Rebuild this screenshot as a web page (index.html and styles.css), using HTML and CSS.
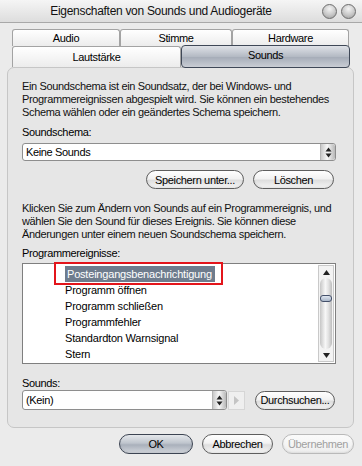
FILE: index.html
```html
<!DOCTYPE html>
<html lang="de">
<head>
<meta charset="utf-8">
<title>Eigenschaften von Sounds und Audiogeräte</title>
<link rel="stylesheet" href="styles.css">
</head>
<body>
<div class="window">
  <div class="titlebar">
    <span class="title">Eigenschaften von Sounds und Audiogeräte</span>
    <div class="winbtns"><span class="wb"></span><span class="wb"></span></div>
  </div>
  <div class="tabs">
    <div class="tabrow back">
      <div class="tab t-audio">Audio</div>
      <div class="tab t-stimme">Stimme</div>
      <div class="tab t-hw">Hardware</div>
    </div>
    <div class="tabrow front">
      <div class="tab t-laut">Lautstärke</div>
      <div class="tab t-sounds active">Sounds</div>
    </div>
  </div>
  <div class="panel">
    <p class="txt">Ein Soundschema ist ein Soundsatz, der bei Windows- und<br>Programmereignissen abgespielt wird. Sie können ein bestehendes<br>Schema wählen oder ein geändertes Schema speichern.</p>
    <div class="lbl lbl-schema">Soundschema:</div>
    <div class="select sel-schema"><span class="val">Keine Sounds</span><span class="spin"><svg width="7" height="11" viewBox="0 0 7 11"><path d="M3.5 0.5L6.5 4.5H0.5Z M3.5 10.5L6.5 6.5H0.5Z" fill="#222"/></svg></span></div>
    <div class="btnrow">
      <button class="btn b-save">Speichern unter...</button>
      <button class="btn b-del">Löschen</button>
    </div>
    <p class="txt txt2">Klicken Sie zum Ändern von Sounds auf ein Programmereignis, und<br>wählen Sie den Sound für dieses Ereignis. Sie können diese<br>Änderungen unter einem neuen Soundschema speichern.</p>
    <div class="lbl lbl-events">Programmereignisse:</div>
    <div class="list">
      <ul class="items">
        <li><span class="sel">Posteingangsbenachrichtigung</span></li>
        <li>Programm öffnen</li>
        <li>Programm schließen</li>
        <li>Programmfehler</li>
        <li>Standardton Warnsignal</li>
        <li>Stern</li>
      </ul>
      <div class="scrollbar">
        <span class="arr"><svg width="7" height="5" viewBox="0 0 7 5"><path d="M3.5 0L7 5H0Z" fill="#222"/></svg></span>
        <div class="track"><span class="thumb"></span></div>
        <span class="arr"><svg width="7" height="5" viewBox="0 0 7 5"><path d="M0 0H7L3.5 5Z" fill="#222"/></svg></span>
      </div>
      <div class="mark"></div>
    </div>
    <div class="lbl lbl-sounds">Sounds:</div>
    <div class="soundrow">
      <div class="select sel-sound"><span class="val">(Kein)</span><span class="spin"><svg width="7" height="11" viewBox="0 0 7 11"><path d="M3.5 0.5L6.5 4.5H0.5Z M3.5 10.5L6.5 6.5H0.5Z" fill="#222"/></svg></span></div>
      <span class="play"><svg width="5" height="9" viewBox="0 0 5 9"><path d="M0 0L5 4.5L0 9Z" fill="#c4c4c4"/></svg></span>
      <button class="btn b-browse">Durchsuchen...</button>
    </div>
  </div>
  <div class="footer">
    <button class="btn b-ok">OK</button>
    <button class="btn b-cancel">Abbrechen</button>
    <button class="btn b-apply" disabled>Übernehmen</button>
  </div>
</div>
</body>
</html>
```
FILE: styles.css
```css
* { box-sizing: border-box; }
html, body { margin: 0; padding: 0; }
body {
  width: 362px;
  height: 466px;
  background: #e8e8e8;
  font-family: "Liberation Sans", Arial, sans-serif;
  font-size: 11px;
  letter-spacing: -0.35px;
  color: #000;
  overflow: hidden;
}
.window {
  width: 362px;
  height: 466px;
  display: flex;
  flex-direction: column;
  background: #ebebeb;
}
.titlebar {
  height: 23px;
  display: flex;
  align-items: center;
  background: linear-gradient(#f5f5f5, #dddddd);
  border-bottom: 1px solid #a8a8a8;
}
.title {
  flex: 1;
  text-align: center;
  font-size: 12px;
  letter-spacing: -0.3px;
  color: #111;
  white-space: nowrap;
}
.winbtns {
  display: flex;
  gap: 4px;
  padding-right: 6px;
}
.wb {
  width: 15px;
  height: 15px;
  border-radius: 50%;
  border: 1px solid #6d6d6d;
  background: radial-gradient(circle at 50% 30%, #f4f4f4 0%, #c8c8c8 55%, #9a9a9a 100%);
}
.tabs {
  padding: 6px 0 0 12px;
  display: flex;
  flex-direction: column;
}
.tabrow { display: flex; }
.tab {
  display: flex;
  align-items: center;
  justify-content: center;
  border: 1px solid #a3a3a3;
  border-bottom: none;
  border-radius: 3px 3px 0 0;
  background: linear-gradient(#ffffff, #ececec);
  white-space: nowrap;
}
.back .tab { height: 17px; }
.t-audio { width: 108px; }
.t-stimme { width: 112px; }
.t-hw { width: 117px; }
.front { height: 21px; }
.t-laut { width: 169px; height: 21px; }
.t-sounds {
  width: 169px;
  height: 23px;
  margin-top: -1px;
  border: 1px solid #3f4857;
  border-radius: 4px;
  background: linear-gradient(#dfe2e7 0%, #b4bac4 50%, #a4abb7 51%, #c9cdd4 100%);
  position: relative;
  z-index: 2;
  align-items: flex-start;
  padding-top: 3px;
}
.panel {
  margin: 0 8px 0 7px;
  height: 361px;
  border: 1px solid #c6c6c6;
  border-radius: 7px;
  background: #e6e6e6;
  padding: 12px 0 0 14px;
  display: flex;
  flex-direction: column;
}
.txt {
  margin: 0;
  line-height: 13px;
  color: #111;
  white-space: nowrap;
}
.lbl { line-height: 13px; }
.lbl-schema { margin-top: 7px; }
.select {
  display: flex;
  align-items: center;
  height: 18px;
  border: 1px solid #8e8e8e;
  border-radius: 3px;
  background: #fff;
  padding-left: 3px;
  justify-content: space-between;
}
.sel-schema { width: 314px; margin-top: 4px; }
.select .val { flex: 1; }
.spin {
  width: 15px;
  height: 16px;
  display: flex;
  align-items: center;
  justify-content: center;
  border-left: 1px solid #b5b5b5;
  border-radius: 0 3px 3px 0;
  background: linear-gradient(90deg, #c9c9c9, #f8f8f8 45%, #b8b8b8);
}
.btnrow {
  display: flex;
  gap: 9px;
  margin-top: 9px;
  padding-left: 124px;
}
.btn {
  font-family: "Liberation Sans", Arial, sans-serif;
  font-size: 11px;
  letter-spacing: -0.35px;
  color: #000;
  height: 19px;
  padding: 0;
  border: 1px solid #5e5e5e;
  border-radius: 10px;
  background: linear-gradient(#ffffff 0%, #f2f2f2 45%, #dedede 55%, #f6f6f6 100%);
  box-shadow: inset 0 -1px 2px rgba(0,0,0,0.08);
  white-space: nowrap;
}
.b-save { width: 98px; }
.b-del { width: 81px; }
.txt2 { margin-top: 13px; }
.lbl-events { margin-top: 6px; }
.list {
  position: relative;
  width: 314px;
  height: 101px;
  margin-top: 3px;
  border: 1px solid #7f7f7f;
  background: #fff;
  display: flex;
}
.items {
  list-style: none;
  margin: 0;
  padding: 2px 0 0 42px;
  flex: 1;
}
.items li {
  height: 16px;
  line-height: 16px;
  font-size: 11px;
  letter-spacing: -0.2px;
  white-space: nowrap;
}
.items .sel {
  display: inline-block;
  background: #6e7c8d;
  color: #fff;
  padding: 0 3px 0 2px;
}
.scrollbar {
  width: 16px;
  margin: 1px 1px 1px 0;
  border: 1px solid #c9c9c9;
  background: #f3f3f3;
  display: flex;
  flex-direction: column;
  align-items: center;
}
.arr {
  height: 12px;
  display: flex;
  align-items: center;
  justify-content: center;
}
.track {
  flex: 1;
  width: 12px;
  border-radius: 6px;
  background: linear-gradient(90deg, #c6c6c6, #f7f7f7 45%, #e2e2e2 70%, #bdbdbd);
  display: flex;
  justify-content: center;
  padding-top: 17px;
}
.thumb {
  width: 13px;
  height: 7px;
  border: 1px solid #44506a;
  border-radius: 3px;
  background: linear-gradient(#dfe6f0, #a9b6c8);
}
.mark {
  position: absolute;
  left: 31px;
  top: -2px;
  width: 169px;
  height: 23px;
  border: 2px solid #e3151b;
}
.lbl-sounds { margin-top: 13px; }
.soundrow {
  display: flex;
  align-items: center;
  height: 20px;
}
.sel-sound { width: 205px; height: 20px; }
.sel-sound .spin { height: 18px; width: 14px; }
.play {
  width: 17px;
  height: 19px;
  margin-left: 1px;
  border: 1px solid #d6d6d6;
  background: #efefef;
  display: flex;
  align-items: center;
  justify-content: center;
}
.b-browse { width: 80px; margin-left: 10px; }
.footer {
  display: flex;
  padding: 6px 0 0 119px;
  gap: 9px;
}
.footer .btn { height: 20px; }
.b-ok {
  width: 74px;
  border-color: #3c4452;
  background: linear-gradient(#e5e8ec 0%, #bfc5cd 45%, #a9b0bb 55%, #d2d6dc 100%);
}
.b-cancel { width: 71px; }
.b-apply {
  width: 72px;
  color: #a0a0a0;
  border-color: #b9b9b9;
  background: linear-gradient(#fbfbfb, #eeeeee);
}
```
